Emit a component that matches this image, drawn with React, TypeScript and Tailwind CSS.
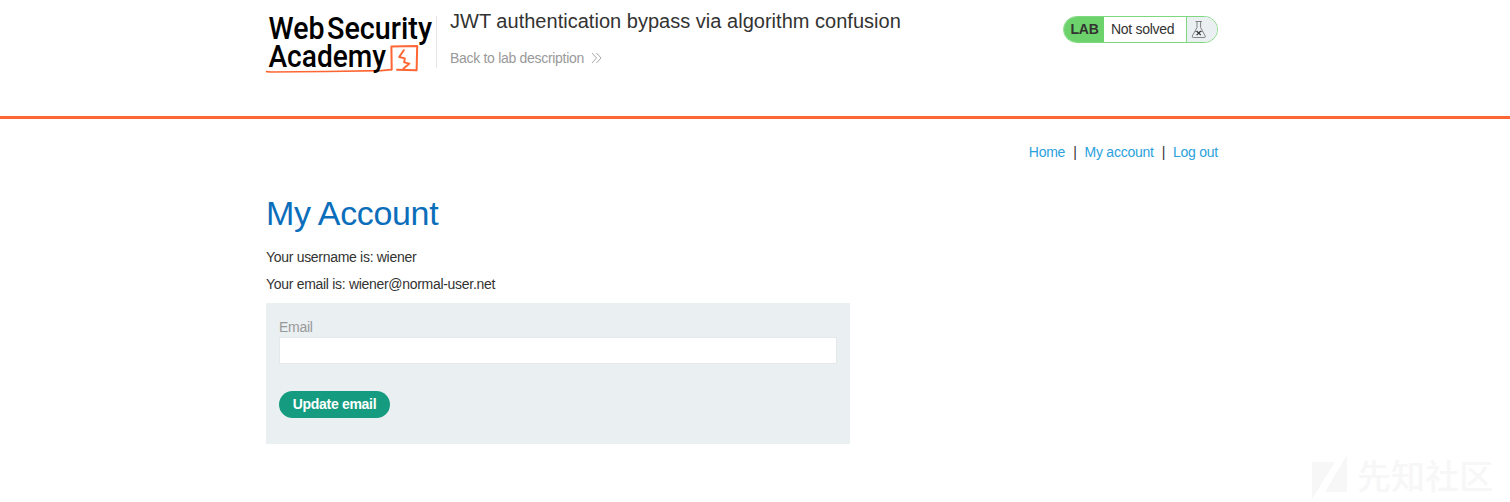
function Logo() {
  return (
    <svg viewBox="0 0 170 64" className="h-16 w-[170px] shrink-0 overflow-visible" aria-label="Web Security Academy">
      <g fill="none" stroke="#ff6633" strokeLinejoin="round" strokeLinecap="round">
        <path d="M0.5 59.6 L5 60 L60 59.5 L115 58.6 L125.5 57.6" strokeWidth="1.6" />
        <path d="M125.7 57.5 L125.4 34.6 L151.2 34 L150.6 58.2 L131 57.8" strokeWidth="2" />
        <path d="M137.8 38.2 L133.2 45 L138.8 46.4 L138.2 50.4 L143.4 51.6 L137.6 56.6" strokeWidth="2" />
      </g>
      <g fill="#000" fontFamily="Roboto, sans-serif" fontWeight="500" fontSize="31">
        <text x="2.5" y="27.2" textLength="56" lengthAdjust="spacingAndGlyphs">Web</text>
        <text x="61" y="27.2" textLength="105" lengthAdjust="spacingAndGlyphs">Security</text>
        <text x="2.5" y="54.7" textLength="117.5" lengthAdjust="spacingAndGlyphs">Academy</text>
      </g>
    </svg>
  );
}

function Flask() {
  return (
    <svg viewBox="0 0 16 20" className="h-5 w-4" fill="none" stroke="#777" strokeWidth="0.9">
      <path d="M4.5 1.5 H11 M6 1.5 V7.5 L1.3 16 Q0.8 17.5 2.3 17.5 H13.2 Q14.7 17.5 14.2 16 L9.6 7.5 V1.5" />
      <path d="M4 11.5 H5.5 M10 11.5 H11.5" />
      <path d="M5.6 11 L9.8 15.2 M9.8 11 L5.6 15.2" stroke="#333" strokeWidth="1.2" />
    </svg>
  );
}

function Watermark() {
  return (
    <div className="absolute left-[1312px] top-[454px] flex h-12 w-[185px] items-start text-[#f7f7f7]">
      <svg viewBox="0 0 185 48" className="h-12 w-[185px] overflow-visible" fill="currentColor">
        <path d="M0 8 H23 L0 45 Z M35 1 V38 H13 Z" />
        <text x="45" y="35" fontFamily="'Noto Sans CJK SC', sans-serif" fontWeight="500" fontSize="34" textLength="136">先知社区</text>
      </svg>
    </div>
  );
}

export default function App() {
  return (
    <div className="relative h-[502px] overflow-hidden bg-white font-['Liberation_Sans',sans-serif] text-[14px] leading-[17px] tracking-[-0.3px] text-[#333332]">
      <header className="h-[119px] border-b-[3px] border-[#ff6633]">
        <div className="mx-auto w-[978px]">
          <div className="flex w-[952px] items-start">
            <div className="pt-[12px] tracking-normal"><Logo /></div>
            <div className="mt-4 h-[52px] w-px bg-[#e5e5e5]" />
            <div className="ml-[13px] flex flex-1 flex-col">
              <h2 className="mt-2 text-[20px] leading-[26px] tracking-[0.02px]">JWT authentication bypass via algorithm confusion</h2>
              <a className="mt-4 flex items-center text-[#999]">
                Back to lab description
                <svg viewBox="0 0 12 12" className="mb-px ml-[7px] h-3 w-3" fill="none" stroke="#aaa" strokeWidth="1">
                  <path d="M1 1 L5.5 6 L1 11 M5.5 1 L10 6 L5.5 11" />
                </svg>
              </a>
            </div>
            <div className="mt-4 flex h-[27px] w-[155px] items-stretch overflow-hidden rounded-full border border-[#7fd87e] bg-white">
              <span className="flex w-10 items-center justify-center bg-[#6cd26b] pl-px font-bold tracking-[-0.2px]">LAB</span>
              <span className="flex flex-1 items-center pl-[7px]">Not solved</span>
              <span className="flex w-[31px] items-center border-l border-[#7fd87e] bg-[#eaeff2] pl-1"><Flask /></span>
            </div>
          </div>
        </div>
      </header>
      <main className="ml-[266px] w-[952px]">
        <nav className="flex h-[65px] items-center justify-end pt-[2px] tracking-[-0.25px] text-[#29a1dd]">
          <a>Home</a>
          <span className="mx-2 text-[#333332]">|</span>
          <a>My account</a>
          <span className="mx-2 text-[#333332]">|</span>
          <a>Log out</a>
        </nav>
        <h1 className="mt-[9px] text-[34px] leading-[40px] tracking-[-0.35px] text-[#0b6ebb]">My Account</h1>
        <p className="mt-4">Your username is: wiener</p>
        <p className="mt-[10px]">Your email is: wiener@normal-user.net</p>
        <form className="mt-[10px] h-[141px] w-[584px] bg-[#eaeff2] px-[13px] pt-4">
          <label className="block text-[#999]">Email</label>
          <input aria-label="Email" className="mt-px block h-[27px] w-full border border-[#e4e8ea] bg-white outline-none" />
          <button type="button" className="mt-[27px] flex h-[27px] w-[111px] items-center justify-center rounded-full bg-[#159c80] pb-px font-bold text-white">Update email</button>
        </form>
      </main>
      <Watermark />
    </div>
  );
}
